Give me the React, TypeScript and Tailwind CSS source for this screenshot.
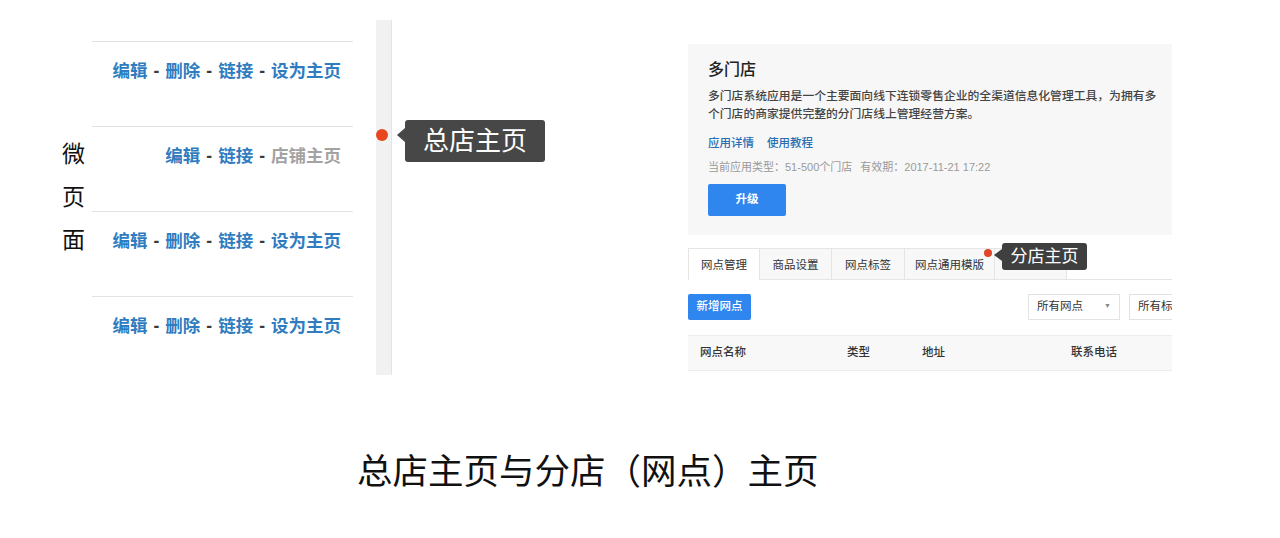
const BLUE = "#2f7cc0";
const CJK = "font-['Liberation_Sans','Noto_Sans_CJK_SC',sans-serif]";

const Sep = () => <span className="mx-[6px] text-[#3a3a3a]">-</span>;

const ActionRow = ({ items, muted }: { items: string[]; muted?: string }) => (
  <div className="h-[85px] border-t border-[#e3e3e3] pt-[19px] pr-[12px] text-right text-[17.5px] font-semibold leading-[20px] whitespace-nowrap">
    {items.map((t, i) => (
      <span key={t}>
        {i > 0 && <Sep />}
        <span style={{ color: BLUE }}>{t}</span>
      </span>
    ))}
    {muted && (
      <>
        <Sep />
        <span className="text-[#a3a3a3]">{muted}</span>
      </>
    )}
  </div>
);

const Tab = ({ label, w, active }: { label: string; w: string; active?: boolean }) => (
  <div
    className={
      active
        ? `${w} h-[32px] shrink-0 border border-b-0 border-[#e5e5e5] bg-white text-center leading-[32px]`
        : `${w} h-[32px] shrink-0 border-r border-b border-t border-[#e5e5e5] bg-[#f8f8f8] text-center leading-[32px]`
    }
  >
    {label}
  </div>
);

export default function App() {
  return (
    <div className={`h-[538px] w-[1280px] overflow-hidden bg-white ${CJK}`}>
      {/* screenshots row */}
      <div className="mt-[20px] flex h-[355px]">
        {/* vertical label */}
        <div className="ml-[62px] flex w-[30px] flex-col self-center text-[23px] leading-[43px] text-[#111]">
          <span>微</span>
          <span>页</span>
          <span>面</span>
        </div>

        {/* action rows */}
        <div className="w-[261px] shrink-0 pt-[21px]">
          <ActionRow items={["编辑", "删除", "链接", "设为主页"]} />
          <ActionRow items={["编辑", "链接"]} muted="店铺主页" />
          <ActionRow items={["编辑", "删除", "链接", "设为主页"]} />
          <ActionRow items={["编辑", "删除", "链接", "设为主页"]} />
        </div>

        {/* scrollbar strip with marker */}
        <div className="relative ml-[23px] h-full w-[16px] shrink-0 border-r border-[#e4e4e4] bg-[#f1f1f1]">
          <div className="absolute left-0 top-[109px] h-[12px] w-[12px] rounded-full bg-[#e8461e]" />
          <div className="absolute left-[21px] top-[108px] h-0 w-0 border-y-[7px] border-r-[8px] border-y-transparent border-r-[#474747]" />
          <div className="absolute left-[29px] top-[100px] flex h-[42px] w-[140px] items-center justify-center rounded-[3px] bg-[#474747] text-[26px] text-white">
            总店主页
          </div>
        </div>

        {/* right panel */}
        <div className="ml-[296px] w-[484px] shrink-0 overflow-hidden text-[11.5px] text-[#333]">
          <div className="mt-[24px] h-[191px] bg-[#f7f7f7] pl-[20px] pr-[12px] pt-[16px]">
            <div className="text-[16px] font-medium leading-[20px] text-[#222]">多门店</div>
            <div className="mt-[7px] text-[11.8px] font-medium leading-[18px] text-[#444]">
              <div className="whitespace-nowrap">
                多门店系统应用是一个主要面向线下连锁零售企业的全渠道信息化管理工具，为拥有多
              </div>
              <div>个门店的商家提供完整的分门店线上管理经营方案。</div>
            </div>
            <div className="mt-[11px] flex gap-[13px] font-medium leading-[18px] text-[#2b6fb3]">
              <span>应用详情</span>
              <span>使用教程</span>
            </div>
            <div className="mt-[6px] whitespace-nowrap text-[11px] leading-[18px] text-[#9a9a9a]">
              当前应用类型：51-500个门店<span className="ml-[8px]">有效期：2017-11-21 17:22</span>
            </div>
            <div className="mt-[8px] flex h-[32px] w-[78px] items-center justify-center rounded-[2px] bg-[#2f86ee] font-semibold text-white">
              升级
            </div>
          </div>

          {/* tabs */}
          <div className="relative mt-[13px] flex">
            <Tab label="网点管理" w="w-[72px]" active />
            <Tab label="商品设置" w="w-[72px]" />
            <Tab label="网点标签" w="w-[73px]" />
            <Tab label="网点通用模版" w="w-[90px]" />
            <Tab label="功能设置" w="w-[72px]" />
            <div className="h-[32px] flex-1 border-b border-[#e5e5e5]" />
            <div className="absolute left-[296px] top-[1px] h-[8px] w-[8px] rounded-full bg-[#e0452a]" />
            <div className="absolute left-[306px] top-[1px] h-0 w-0 border-y-[6px] border-r-[8px] border-y-transparent border-r-[#3f3f3f]" />
            <div className="absolute left-[314px] top-[-5px] flex h-[27px] w-[85px] items-center justify-center rounded-[3px] bg-[#3f3f3f] text-[17px] text-white">
              分店主页
            </div>
          </div>

          {/* toolbar */}
          <div className="mt-[13px] flex items-center">
            <div className="mt-[1px] flex h-[26px] w-[63px] shrink-0 items-center justify-center rounded-[2px] bg-[#2f86ee] font-medium text-white">
              新增网点
            </div>
            <div className="ml-[277px] flex h-[26px] w-[92px] shrink-0 items-center justify-between border border-[#e3e3e3] bg-white px-[8px]">
              <span>所有网点</span>
              <span className="text-[7px] text-[#888]">▼</span>
            </div>
            <div className="ml-[9px] flex h-[26px] w-[92px] shrink-0 items-center whitespace-nowrap border border-[#e3e3e3] bg-white pl-[8px]">
              所有标签
            </div>
          </div>

          {/* table header */}
          <div className="mt-[15px] flex h-[36px] items-center border-y border-[#ececec] bg-[#f8f8f8] font-medium">
            <span className="ml-[12px] w-[147px]">网点名称</span>
            <span className="w-[75px]">类型</span>
            <span className="w-[149px]">地址</span>
            <span>联系电话</span>
          </div>
        </div>
      </div>

      {/* caption */}
      <div className="mt-[77px] pl-[357px] text-[35.5px] leading-[40px] text-[#111]">
        总店主页与分店（网点）主页
      </div>
    </div>
  );
}
